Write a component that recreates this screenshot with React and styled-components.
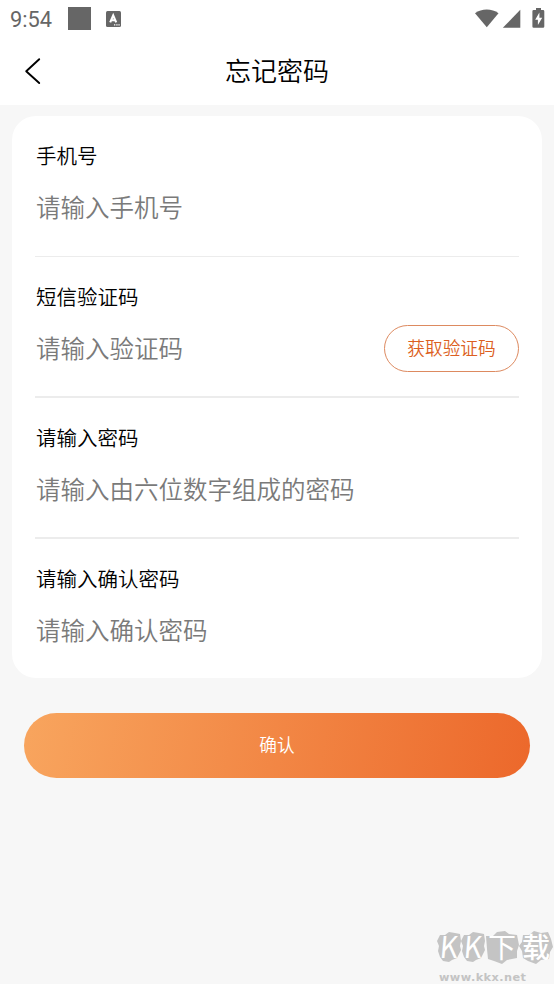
import React from "react";
import styled, { createGlobalStyle } from "styled-components";

const COLORS = {
  white: "#ffffff",
  page: "#f7f7f7",
  black: "#000000",
  status: "#666666",
  placeholder: "#7a7a7a",
  line: "#ececec",
  accent: "#dc5f22",
  accentBorder: "#dd8a60",
  stamp: "#c4c4c4",
};

const GlobalStyle = createGlobalStyle`
  * {
    box-sizing: border-box;
  }

  body {
    margin: 0;
    background: ${COLORS.page};
    font-family: "Noto Sans CJK SC", "Noto Sans", sans-serif;
    font-weight: 350;
  }
`;

const Screen = styled.div`
  width: 554px;
  height: 984px;
  display: flex;
  flex-direction: column;
  overflow: hidden;
  background: ${COLORS.page};
`;

const StatusBar = styled.div`
  height: 37px;
  flex: none;
  display: flex;
  justify-content: space-between;
  padding: 0 9px 0 10px;
  background: ${COLORS.white};
  color: ${COLORS.status};
`;

const StatusGroup = styled.div`
  display: flex;
  align-items: center;
  height: 37px;
`;

const Clock = styled.span`
  width: 58px;
  font-family: Roboto, sans-serif;
  font-size: 21.8px;
  font-weight: 400;
  line-height: 37px;
  padding-top: 2px;
  white-space: nowrap;
`;

const Square = styled.span`
  width: 23px;
  height: 23px;
  margin-right: 15px;
  background: ${COLORS.status};
`;

const Header = styled.header`
  height: 68px;
  flex: none;
  display: grid;
  grid-template-columns: 64px 1fr 64px;
  align-items: center;
  background: ${COLORS.white};
`;

const BackButton = styled.button`
  height: 68px;
  padding: 0;
  border: 0;
  background: none;
  display: flex;
  align-items: center;
`;

const Title = styled.h1`
  margin: 0;
  padding-bottom: 3px;
  font-size: 26px;
  font-weight: inherit;
  line-height: 65px;
  text-align: center;
`;

const Card = styled.form`
  flex: none;
  height: 562px;
  margin: 11px 12px 0;
  padding: 0 23px;
  border-radius: 24px;
  background: ${COLORS.white};
`;

const Field = styled.div`
  height: 141px;
  padding-top: 24px;
  border-bottom: ${({ $line }) => $line}px solid ${COLORS.line};

  &:last-child {
    height: 139px;
  }
`;

const Label = styled.label`
  display: block;
  padding-left: 1px;
  font-size: 20.5px;
  line-height: 31px;
  color: ${COLORS.black};
`;

const InputRow = styled.div`
  display: flex;
  align-items: center;
  height: 47px;
  margin-top: 13px;
`;

const Input = styled.input`
  flex: 1;
  min-width: 0;
  height: 47px;
  padding: 0 0 3px 1px;
  border: 0;
  outline: none;
  background: none;
  font-family: inherit;
  font-weight: inherit;
  font-size: 24.5px;

  &::placeholder {
    color: ${COLORS.placeholder};
    opacity: 1;
  }
`;

const CodeButton = styled.button`
  flex: none;
  width: 135px;
  height: 47px;
  padding: 0 0 2px;
  border: 1px solid ${COLORS.accentBorder};
  border-radius: 24px;
  background: none;
  color: ${COLORS.accent};
  font-family: inherit;
  font-weight: inherit;
  font-size: 17.7px;
  line-height: 43px;
`;

const SubmitButton = styled.button`
  flex: none;
  height: 65px;
  margin: 35px 24px 0;
  padding: 0 0 2px;
  border: 0;
  border-radius: 33px;
  background: linear-gradient(100deg, #f8a55e, #ec682b);
  color: ${COLORS.white};
  font-family: inherit;
  font-weight: inherit;
  font-size: 17.7px;
  line-height: 63px;
`;

const Stamp = styled.footer`
  width: 118px;
  height: 65px;
  margin: auto 0 0 auto;
`;

const StampTiles = styled.svg`
  display: block;
`;

const fields = [
  { id: "phone", label: "手机号", placeholder: "请输入手机号", line: 1 },
  { id: "code", label: "短信验证码", placeholder: "请输入验证码", action: "获取验证码", line: 2 },
  { id: "password", label: "请输入密码", placeholder: "请输入由六位数字组成的密码", line: 2 },
  { id: "confirm", label: "请输入确认密码", placeholder: "请输入确认密码", line: 0 },
];

const KeyboardIcon = () => (
  <svg width="15" height="16" viewBox="0 0 15 16">
    <rect width="15" height="16" rx="1.5" fill="currentColor" />
    <path d="M4.2 11.4 7.2 4.4 10.2 11.4M5.2 9.2h4" fill="none" stroke="#fff" strokeWidth="2.1" />
    <path d="M8 13.9h1.3M10.3 13.9h1.3M12.4 13.9h1.3" stroke="#fff" strokeWidth="1.1" />
  </svg>
);

const StatusIcons = () => (
  <svg width="70" height="22" viewBox="0 0 70 22" fill="currentColor">
    <path d="M0 5.2C6.5 .4 17 .4 23.5 5.2L11.8 19.2z" />
    <path d="M45.3 1.8V19.8H27.8z" />
    <path d="M61 0h5v2H68q1.3 0 1.3 1.3v15.2q0 1.3-1.3 1.3H58.7q-1.3 0-1.3-1.3V3.3q0-1.3 1.3-1.3H61z" />
    <path d="M64.4 4.6 60.2 11.8h2.7v5.3L67.2 9.8h-2.8z" fill="#fff" />
  </svg>
);

const BackIcon = () => (
  <svg width="64" height="68" viewBox="0 0 64 68">
    <path
      d="M39.2 22.2 26.2 34.2 39.2 46"
      fill="none"
      stroke="#000"
      strokeWidth="1.9"
      strokeLinecap="round"
      strokeLinejoin="round"
    />
  </svg>
);

const SiteStamp = () => (
  <Stamp>
    <StampTiles width="118" height="65" viewBox="0 -10 118 65">
      <g fill={COLORS.stamp}>
        <path d="M4 6 9 6 13 3 19 4 24 5 25 12 24 17 25 21 21 29 16 31 13 33 7 32 4 28 2 22 3 17 1 12z" />
        <path d="M28 6 33 6 37 3 43 4 48 5 49 12 48 17 49 21 45 29 40 31 37 33 31 32 28 28 26 22 27 17 25 12z" />
        <path d="M50 7 57 7 61 3 69 2 73 5 81 6 83 16 81 22 81 29 71 31 66 35 58 32 52 30 51 20z" />
        <path d="M87 6 93 6 98 2 105 4 112 3 115 10 117 18 114 23 113 30 105 31 100 35 92 32 87 29 86 22 83 17 86 13z" />
      </g>
      <g fill="#fff" fontFamily="'Noto Sans CJK SC', sans-serif" fontWeight="400">
        <text transform="translate(3 29) skewX(-5) scale(.93 1)" fontSize="30">K</text>
        <text transform="translate(27 29) skewX(-5) scale(.93 1)" fontSize="30">K</text>
        <text x="52" y="29" fontSize="28">下</text>
        <text x="86" y="28.5" fontSize="28" fontWeight="500">载</text>
      </g>
      <text
        x="3"
        y="52.4"
        fill={COLORS.stamp}
        fontFamily="'DejaVu Sans', sans-serif"
        fontWeight="700"
        fontSize="11.3"
        textLength="87"
      >
        www.kkx.net
      </text>
    </StampTiles>
  </Stamp>
);

const App = () => (
  <>
    <GlobalStyle />
    <Screen>
      <StatusBar>
        <StatusGroup>
          <Clock>9:54</Clock>
          <Square />
          <KeyboardIcon />
        </StatusGroup>
        <StatusGroup>
          <StatusIcons />
        </StatusGroup>
      </StatusBar>

      <Header>
        <BackButton type="button" aria-label="返回">
          <BackIcon />
        </BackButton>
        <Title>忘记密码</Title>
      </Header>

      <Card>
        {fields.map(({ id, label, placeholder, action, line }) => (
          <Field key={id} $line={line}>
            <Label htmlFor={id}>{label}</Label>
            <InputRow>
              <Input id={id} placeholder={placeholder} />
              {action && <CodeButton type="button">{action}</CodeButton>}
            </InputRow>
          </Field>
        ))}
      </Card>

      <SubmitButton type="button">确认</SubmitButton>

      <SiteStamp />
    </Screen>
  </>
);

export default App;
